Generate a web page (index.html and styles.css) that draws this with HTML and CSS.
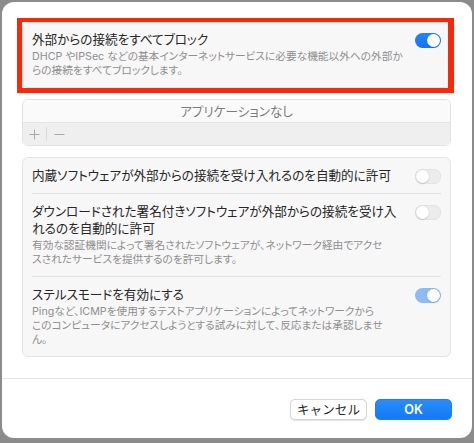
FILE: index.html
```html
<!DOCTYPE html>
<html lang="ja">
<head>
<meta charset="utf-8">
<title>ファイアウォールオプション</title>
<link rel="stylesheet" href="styles.css">
</head>
<body>
<div class="window">
  <div class="content">
    <section class="card card-first">
      <div class="row">
        <div class="text">
          <div class="title">外部からの接続をすべてブロック</div>
          <div class="desc">DHCP やIPSec などの基本インターネットサービスに必要な機能以外への外部か<br>らの接続をすべてブロックします。</div>
        </div>
        <span class="toggle on"><span class="knob"></span></span>
      </div>
      <div class="annotation"></div>
    </section>

    <section class="apps">
      <div class="apps-header">アプリケーションなし</div>
      <div class="apps-footer">
        <svg class="tool" width="11" height="11" viewBox="0 0 11 11"><path d="M5.5 0.5v10M0.5 5.5h10" stroke="#a9a9a9" stroke-width="1" fill="none"/></svg>
        <span class="tool-sep"></span>
        <svg class="tool" width="11" height="11" viewBox="0 0 11 11"><path d="M0.5 5.5h10" stroke="#a9a9a9" stroke-width="1" fill="none"/></svg>
      </div>
    </section>

    <section class="card">
      <div class="row">
        <div class="text">
          <div class="title">内蔵ソフトウェアが外部からの接続を受け入れるのを自動的に許可</div>
        </div>
        <span class="toggle off"><span class="knob"></span></span>
      </div>
      <div class="divider"></div>
      <div class="row">
        <div class="text">
          <div class="title">ダウンロードされた署名付きソフトウェアが外部からの接続を受け入<br>れるのを自動的に許可</div>
          <div class="desc">有効な認証機関によって署名されたソフトウェアが、ネットワーク経由でアクセ<br>スされたサービスを提供するのを許可します。</div>
        </div>
        <span class="toggle off"><span class="knob"></span></span>
      </div>
      <div class="divider"></div>
      <div class="row">
        <div class="text">
          <div class="title">ステルスモードを有効にする</div>
          <div class="desc">Pingなど、ICMPを使用するテストアプリケーションによってネットワークから<br>このコンピュータにアクセスしようとする試みに対して、反応または承認しませ<br>ん。</div>
        </div>
        <span class="toggle on dim"><span class="knob"></span></span>
      </div>
    </section>
  </div>

  <footer class="footer">
    <button class="btn btn-cancel">キャンセル</button>
    <button class="btn btn-ok">OK</button>
  </footer>
</div>
</body>
</html>
```

FILE: styles.css
```css
* { box-sizing: border-box; }

html, body {
  margin: 0;
  padding: 0;
}

body {
  width: 474px;
  height: 443px;
  background: #8b8b8b;
  font-family: "Inter", "Noto Sans CJK JP", sans-serif;
  font-feature-settings: "palt";
  color: #262626;
  padding: 2px 2px 5px 2px;
}

.window {
  width: 470px;
  height: 436px;
  background: #ffffff;
  border-radius: 12px;
  display: flex;
  flex-direction: column;
  overflow: hidden;
}

.content {
  padding: 20px 21px 21px 20px;
  display: flex;
  flex-direction: column;
  gap: 11px;
  border-bottom: 1px solid #e6e6e6;
}

.card {
  position: relative;
  background: #f7f7f7;
  border: 1px solid #e4e4e4;
  border-radius: 6px;
  padding: 0 9px;
}

.row {
  display: flex;
  align-items: flex-start;
  justify-content: space-between;
  padding: 9px 0 9px 0;
}

.card-first .row {
  padding: 8px 0 9px 0;
}

.text {
  flex: 1;
  min-width: 0;
}

.title {
  font-size: 12.6px;
  line-height: 17px;
  color: #262626;
  white-space: nowrap;
}

.desc {
  font-size: 10.7px;
  line-height: 14px;
  color: #8e8e8e;
  margin-top: 2px;
  white-space: nowrap;
}

.divider {
  height: 1px;
  background: #e3e3e3;
}

.toggle {
  position: relative;
  flex: none;
  width: 26px;
  height: 15px;
  border-radius: 8px;
  margin-top: 2px;
  margin-left: 12px;
}

.toggle .knob {
  position: absolute;
  top: 1px;
  width: 13px;
  height: 13px;
  border-radius: 50%;
  background: #ffffff;
  box-shadow: 0 0.5px 1.5px rgba(0,0,0,0.25);
}

.toggle.on {
  background: linear-gradient(#1e86fb, #1476ee);
}

.toggle.on .knob { right: 1px; }

.toggle.on.dim {
  background: #8cbcf7;
}

.toggle.off {
  background: #ececec;
  box-shadow: inset 0 0 0 0.5px #dcdcdc;
}

.toggle.off .knob { left: 1px; }

.annotation {
  position: absolute;
  left: -6px;
  top: -5px;
  right: -4px;
  bottom: -6px;
  border: solid #f8290b;
  border-width: 4px 6px 5px 5px;
  pointer-events: none;
}

.apps {
  border: 1px solid #e2e2e2;
  border-radius: 6px;
  overflow: hidden;
}

.apps-header {
  height: 23px;
  background: #fafafa;
  border-bottom: 1px solid #e4e4e4;
  font-size: 12.6px;
  line-height: 23px;
  text-align: center;
  color: #7c7c7c;
}

.apps-footer {
  height: 22px;
  background: #efefef;
  display: flex;
  align-items: center;
  padding-left: 5px;
}

.tool {
  display: block;
  margin: 0 1px;
}

.tool-sep {
  width: 1px;
  height: 14px;
  background: #dcdcdc;
  margin: 0 6px 0 5px;
}

.footer {
  flex: 1;
  display: flex;
  justify-content: flex-end;
  align-items: flex-start;
  gap: 8px;
  padding: 20px 20px 0 0;
}

.btn {
  height: 21px;
  width: 77px;
  border-radius: 5px;
  font-family: inherit;
  font-size: 12.6px;
  line-height: 19px;
  padding: 0;
  cursor: default;
}

.btn-cancel {
  background: #ffffff;
  color: #262626;
  border: 1px solid #d6d6d6;
  box-shadow: 0 0.5px 1px rgba(0,0,0,0.12);
}

.btn-ok {
  background: linear-gradient(#2a8cfc, #1479f5);
  color: #ffffff;
  border: 1px solid #1a7ef4;
  font-weight: 600;
}
```
